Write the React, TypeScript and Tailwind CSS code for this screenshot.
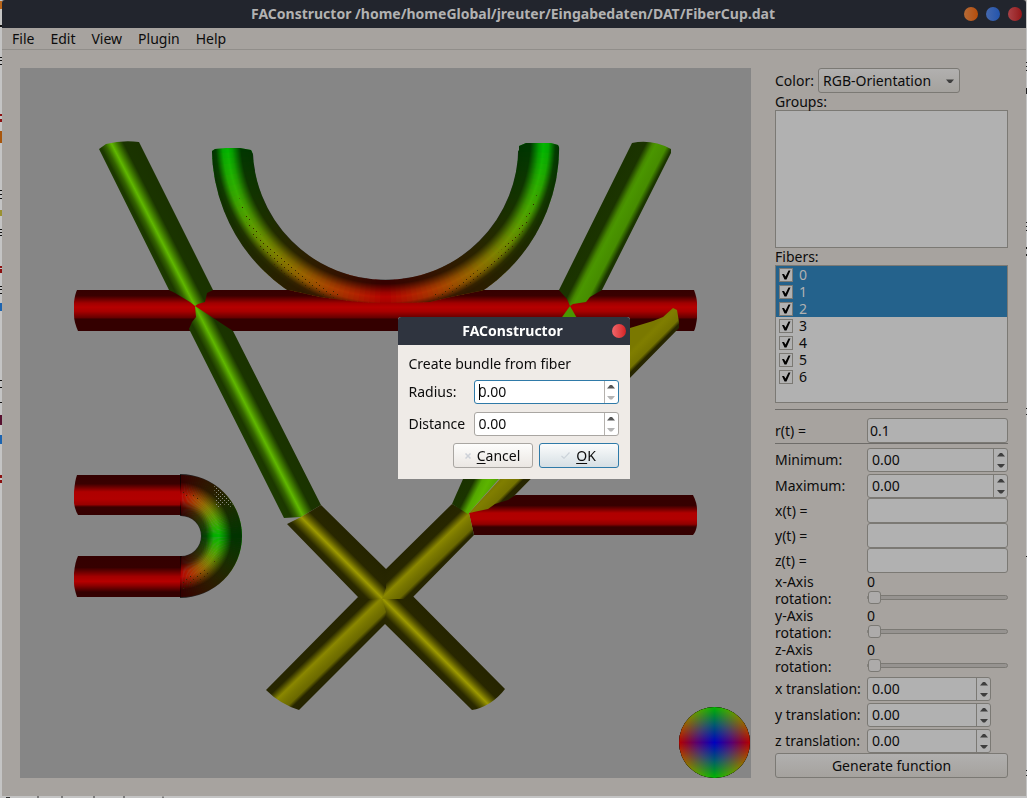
import React, { useState } from 'react';

const menus = ['File', 'Edit', 'View', 'Plugin', 'Help'];
const fibers = ['0', '1', '2', '3', '4', '5', '6'];
const selectedFibers = ['0', '1', '2'];

type Stop = [number, string];

// Shading across a tube, from one edge to the other
const shades: Record<string, { line: [number, number, number, number]; stops: Stop[] }> = {
  redTop: {
    line: [0, 290, 0, 331],
    stops: [[0, '#340000'], [0.14, '#3a0000'], [0.32, '#a00000'], [0.42, '#b60000'], [0.52, '#a80000'], [0.69, '#5e0000'], [0.7, '#340000'], [1, '#340000']],
  },
  redRight: {
    line: [0, 495, 0, 535],
    stops: [[0, '#340000'], [0.26, '#360000'], [0.45, '#b00000'], [0.6, '#b20000'], [0.73, '#900000'], [0.8, '#360000'], [1, '#340000']],
  },
  redUpper: {
    line: [0, 475, 0, 515],
    stops: [[0, '#340000'], [0.22, '#3a0000'], [0.42, '#ae0000'], [0.6, '#b20000'], [0.74, '#980000'], [0.8, '#380000'], [1, '#340000']],
  },
  redLower: {
    line: [0, 556, 0, 597],
    stops: [[0, '#340000'], [0.28, '#360000'], [0.5, '#a20000'], [0.62, '#b60000'], [0.72, '#8c0000'], [0.88, '#340000'], [1, '#340000']],
  },
  greenLeft: {
    line: [169, 290, 204, 272],
    stops: [[0, '#1c3a00'], [0.12, '#1c3800'], [0.25, '#346400'], [0.4, '#60b800'], [0.5, '#468600'], [0.62, '#284e00'], [0.68, '#1a3400'], [1, '#1a3200']],
  },
  greenRight: {
    line: [559, 290, 594, 308],
    stops: [[0, '#1a3200'], [0.26, '#1b3400'], [0.42, '#458600'], [0.5, '#4a9600'], [0.76, '#468c00'], [0.9, '#1b3600'], [1, '#1a3200']],
  },
  greenLower: {
    line: [463, 479, 498, 497],
    stops: [[0, '#1a3200'], [0.26, '#1b3400'], [0.45, '#54a800'], [0.6, '#5cb400'], [1, '#489000']],
  },
  oliveFall: {
    line: [358, 597, 386, 569],
    stops: [[0, '#262500'], [0.14, '#2a2900'], [0.3, '#666400'], [0.41, '#9c9900'], [0.54, '#5c5a00'], [0.66, '#282700'], [1, '#252400']],
  },
  oliveRise: {
    line: [386, 569, 413, 597],
    stops: [[0, '#252400'], [0.26, '#282700'], [0.46, '#8a8700'], [0.6, '#7a7800'], [0.78, '#6a6800'], [0.88, '#272600'], [1, '#252400']],
  },
  oliveFar: {
    line: [642, 337, 670, 365],
    stops: [[0, '#7a7800'], [0.1, '#807e00'], [0.34, '#747200'], [0.43, '#272600'], [1, '#252400']],
  },
};

// A bent tube built of wedges, each coloured by the direction of its tangent
function Bend({ cx, cy, inner, outer, from, to }: { cx: number; cy: number; inner: number; outer: number; from: number; to: number }) {
  const wedges: React.ReactNode[] = [];
  const step = 2;
  for (let a = from; a < to; a += step) {
    const a0 = (a * Math.PI) / 180;
    const a1 = ((a + step + 0.4) * Math.PI) / 180;
    const mid = ((a + step / 2) * Math.PI) / 180;
    const red = Math.round(182 * Math.abs(Math.sin(mid)));
    const green = Math.round(182 * Math.abs(Math.cos(mid)));
    const points = [
      [cx + inner * Math.cos(a0), cy + inner * Math.sin(a0)],
      [cx + outer * Math.cos(a0), cy + outer * Math.sin(a0)],
      [cx + outer * Math.cos(a1), cy + outer * Math.sin(a1)],
      [cx + inner * Math.cos(a1), cy + inner * Math.sin(a1)],
    ];
    wedges.push(<polygon key={a} points={points.map((p) => p.join(',')).join(' ')} fill={`rgb(${red},${green},0)`} />);
  }
  return <>{wedges}</>;
}

function FiberView() {
  return (
    <svg viewBox="20 68 731 710" className="block w-full bg-[#868686]" role="img" aria-label="Fiber view">
      <defs>
        {Object.entries(shades).map(([id, shade]) => (
          <linearGradient
            key={id}
            id={id}
            gradientUnits="userSpaceOnUse"
            x1={shade.line[0]}
            y1={shade.line[1]}
            x2={shade.line[2]}
            y2={shade.line[3]}
          >
            {shade.stops.map(([offset, color]) => (
              <stop key={offset} offset={offset} stopColor={color} />
            ))}
          </linearGradient>
        ))}
        <radialGradient id="arcShade" gradientUnits="userSpaceOnUse" cx="385.500" cy="139" r="173.500">
          <stop offset="0.765" stopOpacity="0.72" />
          <stop offset="0.835" stopOpacity="0.7" />
          <stop offset="0.885" stopOpacity="0.15" />
          <stop offset="0.91" stopOpacity="0" />
          <stop offset="0.94" stopOpacity="0.08" />
          <stop offset="0.98" stopOpacity="0.66" />
          <stop offset="1" stopOpacity="0.72" />
        </radialGradient>
        <radialGradient id="bendShade" gradientUnits="userSpaceOnUse" cx="178" cy="536" r="64">
          <stop offset="0.34" stopOpacity="0.72" />
          <stop offset="0.44" stopOpacity="0.6" />
          <stop offset="0.56" stopOpacity="0.05" />
          <stop offset="0.64" stopOpacity="0" />
          <stop offset="0.72" stopOpacity="0.25" />
          <stop offset="0.84" stopOpacity="0.72" />
          <stop offset="1" stopOpacity="0.72" />
        </radialGradient>
        <clipPath id="arcClip">
          <path d="M212 151 L215 149 L226 148 L240 148 L251 150 L254 156 L300 230 H460 L519 150 L519 146 L526 143 L551 143 L558 145 L560 149 L580 290 H485 L470 293 L446 298 L430 302 L405 303 H372 L350 301 L320 297 L289 290 H200 Z" />
        </clipPath>
        <linearGradient id="ballRed">
          <stop offset="0" stopColor="#b40000" />
          <stop offset="0.5" stopColor="#000" />
          <stop offset="1" stopColor="#b40000" />
        </linearGradient>
        <linearGradient id="ballGreen" x2="0" y2="1">
          <stop offset="0" stopColor="#00b400" />
          <stop offset="0.5" stopColor="#000" />
          <stop offset="1" stopColor="#00b400" />
        </linearGradient>
        <radialGradient id="ballBlue">
          <stop offset="0" stopColor="#0000be" />
          <stop offset="0.5" stopColor="#00006e" />
          <stop offset="0.8" stopColor="#000028" />
          <stop offset="1" stopColor="#000" />
        </radialGradient>
        <pattern id="speckle" width="4" height="4" patternUnits="userSpaceOnUse">
          <rect width="1" height="1" fill="#8c8c80" />
          <rect x="2" y="2" width="1" height="1" fill="#8c8c80" />
        </pattern>
        <pattern id="grain" width="7" height="6" patternUnits="userSpaceOnUse">
          <rect x="1" width="1" height="1" fill="#3a2400" />
          <rect x="4" y="3" width="1" height="1" fill="#3a2400" />
        </pattern>
      </defs>

      {/* straight bundles along x */}
      <path d="M77 290 H694 Q697 298 697 303 V318 Q696 327 694 331 H78 Q74 322 74 315 V302 Q75 294 77 290 Z" fill="url(#redTop)" />
      <path d="M469 513 L490 500 L516 495 H693 Q697 503 697 509 V525 Q696 532 693 535 H474 Z" fill="url(#redRight)" />

      {/* large arc */}
      <g clipPath="url(#arcClip)">
        <Bend cx={385.5} cy={147} inner={133} outer={173.5} from={-4} to={184} />
        <circle cx="385.500" cy="147" r="153.250" fill="none" stroke="url(#arcShade)" strokeWidth="41" />
        <path d="M236 190 Q262 262 345 296 L335 298 Q258 280 236 190 Z" fill="url(#grain)" />
        <path d="M538 190 Q514 262 430 296 L440 298 Q520 270 538 190 Z" fill="url(#grain)" />
      </g>

      {/* left descending bundle */}
      <path d="M99 149 L106 144 Q122 140 139 142 L213 290 L207 293 L205 302 L198 304 L195 306 L190 302 L175 293 L169 290 Z" fill="url(#greenLeft)" />
      <path d="M195 306 L233 331 L321 505 L301 517 L284 518 L189 329 L192 322 L196 317 Z" fill="url(#greenLeft)" />

      {/* right descending bundle */}
      <path d="M632 143 Q652 139 671 149 V153 L602 290 L590 297 L586 302 L573 304 L570 306 L567 299 L559 290 Z" fill="url(#greenRight)" />
      <path d="M570 306 L578 320 H560 Z" fill="#4a9600" />

      {/* crossing diagonals */}
      <path d="M287 524 L301 517 L321 505 L386 569 L505 689 Q499 697 490 703 Q480 709 472 710 L385 624 L358 597 Z" fill="url(#oliveFall)" />
      <path d="M452 504 L386 569 V588 L382 599 H404 L413 597 L474 535 L469 513 Z" fill="url(#oliveRise)" />
      <path d="M358 597 L367 599 H382 L386 612 L385 624 L299 710 Q280 704 266 690 Z" fill="url(#oliveRise)" />
      <path d="M463 479 L475 455 H520 L468 514 L452 504 Z" fill="url(#greenLower)" />
      <path d="M673 308 L677 310 L679 322 V328 L514 496 L508 500 L495 504 L488 509 L469 513 L600 370 L630 328 L653 321 L663 317 Z" fill="url(#oliveFar)" />

      {/* U-shaped bundle */}
      <path d="M77 475 H182 V515 H78 Q75 510 74 503 V492 Q75 480 77 475 Z" fill="url(#redUpper)" />
      <path d="M78 556 H182 V597 H77 Q74 588 74 583 V573 Q75 562 78 556 Z" fill="url(#redLower)" />
      <Bend cx={181} cy={536} inner={20.5} outer={61} from={-90} to={90} />
      <path d="M180 474 A62 62 0 0 1 180 598 V556 H181 A20 20 0 0 0 181 516 H180 Z" fill="url(#bendShade)" />
      <path d="M214 486 L224 492 L236 510 L226 504 L216 508 Z" fill="url(#speckle)" />
      <path d="M182 490 Q212 498 222 520 L210 504 L184 496 Z" fill="url(#grain)" />
      <path d="M180 590 Q208 585 222 550 L210 568 L180 580 Z" fill="url(#grain)" />

      {/* orientation ball */}
      <g className="isolate">
        <circle cx="714.500" cy="742.500" r="35.500" fill="url(#ballRed)" />
        <circle cx="714.500" cy="742.500" r="35.500" fill="url(#ballGreen)" className="mix-blend-screen" />
        <circle cx="714.500" cy="742.500" r="35.500" fill="url(#ballBlue)" className="mix-blend-screen" />
      </g>
    </svg>
  );
}

function Triangle({ down }: { down?: boolean }) {
  return (
    <svg width="8" height="5" viewBox="0 0 8 5" fill="currentColor" aria-hidden="true">
      {down ? <path d="M0 1h8L5 4.500H3z" /> : <path d="M0 4.500h8L5 1H3z" />}
    </svg>
  );
}

function SpinBox({ id, className }: { id: string; className: string }) {
  const [value, setValue] = useState('0.00');
  const bump = (by: number) => setValue((parseFloat(value || '0') + by).toFixed(2));

  return (
    <div className={`flex h-6 rounded-[3px] border border-[#7b7974] bg-[#b1b1b1] ${className}`}>
      <input
        id={id}
        value={value}
        onChange={(e) => setValue(e.target.value)}
        className="min-w-0 flex-1 bg-transparent pl-1 outline-none"
      />
      <div className="flex w-3.5 flex-col border-l border-[#7b7974] text-[#3e3e3e]">
        <button type="button" aria-label="Increase" onClick={() => bump(1)} className="flex flex-1 items-center justify-center">
          <Triangle />
        </button>
        <button type="button" aria-label="Decrease" onClick={() => bump(-1)} className="flex flex-1 items-center justify-center">
          <Triangle down />
        </button>
      </div>
    </div>
  );
}

function TextField({ id, label, initial = '' }: { id: string; label: string; initial?: string }) {
  return (
    <div className="flex h-[25px] items-center">
      <label htmlFor={id} className="w-[92px] shrink-0">{label}</label>
      <input
        id={id}
        defaultValue={initial}
        className="h-[25px] min-w-0 flex-1 rounded-[3px] border border-[#7b7974] bg-[#b1b1b1] px-0.5 outline-none"
      />
    </div>
  );
}

function RotationRow({ axis }: { axis: string }) {
  const [value, setValue] = useState(0);

  return (
    <div className="flex h-[34px] leading-[17px]">
      <label htmlFor={`${axis}-rotation`} className="w-[92px] shrink-0">
        {axis}-Axis
        <br />
        rotation:
      </label>
      <div className="min-w-0 flex-1">
        <output className="block">{value}</output>
        <input
          id={`${axis}-rotation`}
          type="range"
          min={0}
          max={360}
          value={value}
          onChange={(e) => setValue(Number(e.target.value))}
          className="block h-[15px] w-full appearance-none bg-transparent outline-none [&::-webkit-slider-runnable-track]:h-[5px] [&::-webkit-slider-runnable-track]:rounded-sm [&::-webkit-slider-runnable-track]:border [&::-webkit-slider-runnable-track]:border-[#7b7974] [&::-webkit-slider-runnable-track]:bg-[#969390] [&::-webkit-slider-thumb]:-mt-[5px] [&::-webkit-slider-thumb]:size-[13px] [&::-webkit-slider-thumb]:appearance-none [&::-webkit-slider-thumb]:rounded-[3px] [&::-webkit-slider-thumb]:border [&::-webkit-slider-thumb]:border-[#7b7974] [&::-webkit-slider-thumb]:bg-[#adabaa]"
        />
      </div>
    </div>
  );
}

function Sidebar() {
  return (
    <aside className="w-[233px] shrink-0">
      <div className="flex h-[25px] items-center">
        <label htmlFor="color" className="w-[43px] shrink-0">Color:</label>
        <div className="relative">
          <select
            id="color"
            className="block h-[25px] w-[142px] appearance-none rounded-[3px] border border-[#7b7974] bg-linear-to-b from-[#b1b0af] to-[#a5a29e] pl-1 outline-none"
          >
            <option>RGB-Orientation</option>
          </select>
          <svg width="8" height="5" viewBox="0 0 8 5" className="pointer-events-none absolute top-[11px] right-1.5" aria-hidden="true">
            <path d="M0 0.500h8L5 4H3z" fill="#3e3e3e" />
          </svg>
        </div>
      </div>

      <h2 className="leading-[17px]">Groups:</h2>
      <div className="h-[138px] border border-[#7b7974] bg-[#b1b1b1]" />

      <h2 className="leading-[17px]">Fibers:</h2>
      <ul className="h-[138px] border border-[#7b7974] bg-[#b1b1b1]">
        {fibers.map((fiber) => (
          <li key={fiber} className={selectedFibers.includes(fiber) ? 'bg-[#24628c] text-[#b1b1b1]' : ''}>
            <label className="flex h-[17px] items-center gap-1.5 pl-[3px]">
              <span className="relative flex">
                <input
                  type="checkbox"
                  defaultChecked
                  className="peer size-3.5 appearance-none border border-[#7b7974] bg-[#b1b1b1]"
                />
                <svg viewBox="0 0 14 14" className="pointer-events-none absolute inset-0 hidden size-3.5 text-black peer-checked:block" aria-hidden="true">
                  <path d="M3 6 L5 6 L6.500 8.500 L9.500 2.500 L11.500 2.500 L7.500 11.500 H5.500 Z" fill="currentColor" />
                </svg>
              </span>
              {fiber}
            </label>
          </li>
        ))}
      </ul>

      <hr className="mt-1.5 mb-2 border-[#6e6c69]" />
      <TextField id="radius-fn" label="r(t) =" initial="0.1" />
      <hr className="mb-1 border-[#6e6c69]" />

      <div className="flex flex-col gap-0.5">
        <div className="flex items-center">
          <label htmlFor="minimum" className="w-[92px] shrink-0">Minimum:</label>
          <SpinBox id="minimum" className="min-w-0 flex-1" />
        </div>
        <div className="flex items-center">
          <label htmlFor="maximum" className="w-[92px] shrink-0">Maximum:</label>
          <SpinBox id="maximum" className="min-w-0 flex-1" />
        </div>
      </div>
      <TextField id="x-fn" label="x(t) =" />
      <TextField id="y-fn" label="y(t) =" />
      <TextField id="z-fn" label="z(t) =" />

      <RotationRow axis="x" />
      <RotationRow axis="y" />
      <RotationRow axis="z" />

      <div className="flex flex-col gap-0.5 pt-0.5">
        {['x', 'y', 'z'].map((axis) => (
          <div key={axis} className="flex items-center">
            <label htmlFor={`${axis}-translation`} className="w-[92px] shrink-0 whitespace-nowrap">{axis} translation:</label>
            <SpinBox id={`${axis}-translation`} className="w-[124px]" />
          </div>
        ))}
      </div>

      <button
        type="button"
        className="block h-[25px] w-full rounded-[3px] border border-[#7b7974] bg-linear-to-b from-[#b1b0af] to-[#a5a29e]"
      >
        Generate function
      </button>
    </aside>
  );
}

function DialogSpin({ id, label, focused }: { id: string; label: string; focused?: boolean }) {
  const [value, setValue] = useState('0.00');
  const edge = focused ? 'border-[#2f7aa8]' : 'border-[#a9a6a2]';

  return (
    <div className="flex items-center">
      <label htmlFor={id} className="w-[65px] shrink-0">{label}</label>
      <div className={`relative flex h-6 min-w-0 flex-1 rounded-[3px] border bg-white ${edge}`}>
        <input
          id={id}
          value={value}
          onChange={(e) => setValue(e.target.value)}
          className="min-w-0 flex-1 bg-transparent pl-1 outline-none"
        />
        {focused && <span className="absolute top-[3px] left-1 h-4 w-px bg-black" />}
        <div className="flex w-3.5 flex-col border-l border-[#b5b2ae]">
          <button type="button" aria-label={`Increase ${label}`} onClick={() => setValue((parseFloat(value) + 1).toFixed(2))} className="flex flex-1 items-center justify-center text-[#555]">
            <Triangle />
          </button>
          <button type="button" aria-label={`Decrease ${label}`} className="flex flex-1 items-center justify-center text-[#b4b4b4]">
            <Triangle down />
          </button>
        </div>
      </div>
    </div>
  );
}

function BundleDialog() {
  return (
    <div className="fixed inset-0 flex items-center justify-center pb-0.5">
      <div role="dialog" aria-labelledby="dialog-title" className="w-[232px] overflow-hidden rounded-t-[3px] bg-[#efebe7]">
        <div className="flex h-7 items-center bg-[#2f343f] pr-1">
          <h2 id="dialog-title" className="flex-1 pl-4 text-center font-bold text-white">FAConstructor</h2>
          <button type="button" aria-label="Close" className="size-3.5 rounded-full bg-linear-to-r from-[#f2656b] to-[#d41e22]" />
        </div>
        <form className="px-[11px] pt-2.5 pb-[11px]">
          <div className="flex flex-col gap-2">
            <p className="leading-[17px]">Create bundle from fiber</p>
            <DialogSpin id="radius" label="Radius:" focused />
            <DialogSpin id="distance" label="Distance" />
          </div>
          <div className="mt-[7px] flex justify-end gap-1.5">
            <button
              type="button"
              className="flex h-[25px] w-20 items-center justify-center gap-1.5 rounded-[3px] border border-[#a9a6a2] bg-linear-to-b from-[#fdfdfc] to-[#ebe7e3]"
            >
              <svg width="6" height="6" viewBox="0 0 6 6" stroke="#cdd1d8" strokeWidth="1.500" aria-hidden="true">
                <path d="M0.500 0.500l5 5M5.500 0.500l-5 5" />
              </svg>
              <span><span className="underline underline-offset-2">C</span>ancel</span>
            </button>
            <button
              type="button"
              className="flex h-[25px] w-20 items-center justify-center gap-1.5 rounded-[3px] border border-[#2f7aa8] bg-linear-to-b from-[#fbfcfc] to-[#d6dfe4]"
            >
              <svg width="9" height="7" viewBox="0 0 9 7" fill="none" stroke="#ccd3da" strokeWidth="1.200" aria-hidden="true">
                <path d="M0.500 4l2.500 2.300L8.500 0.500" />
              </svg>
              <span><span className="underline underline-offset-2">O</span>K</span>
            </button>
          </div>
        </form>
      </div>
    </div>
  );
}

type Mark = [number, number, string];

// What still shows of the editor window behind the frame
const leftMarks: Mark[] = [
  [1, 8, '#b8651a'], [25, 2, '#111'], [57, 1, '#111'], [60, 1, '#111'], [64, 1, '#111'], [114, 2, '#8c1010'], [119, 3, '#8c1010'],
  [131, 12, '#a8560c'], [190, 1, '#111'], [194, 1, '#111'], [198, 1, '#111'], [210, 6, '#9a9130'], [229, 1, '#111'], [232, 1, '#111'],
  [235, 1, '#111'], [266, 2, '#8c1010'], [269, 4, '#8c1010'], [286, 1, '#111'], [289, 1, '#111'], [293, 1, '#111'], [303, 8, '#1c64b0'],
  [380, 1, '#111'], [387, 1, '#111'], [402, 1, '#111'], [415, 10, '#571030'], [435, 9, '#1c64b0'], [475, 3, '#8c1010'], [480, 3, '#8c1010'],
];
const rightMarks: Mark[] = [
  [62, 1, '#222'], [66, 1, '#222'], [70, 1, '#222'], [88, 6, '#222'], [222, 1, '#222'], [226, 1, '#222'], [230, 1, '#222'],
  [247, 2, '#222'], [254, 2, '#222'], [408, 1, '#222'], [414, 1, '#222'], [556, 1, '#222'], [770, 1, '#222'], [775, 1, '#222'],
];

function BehindEdge({ marks, width }: { marks: Mark[]; width: number }) {
  return (
    <svg width={width} height="796" className="shrink-0" aria-hidden="true">
      {marks.map(([y, h, color]) => (
        <rect key={y} y={y} width={width} height={h} fill={color} />
      ))}
    </svg>
  );
}

function BehindBottom() {
  return (
    <svg width="180" height="2" viewBox="0 0 180 2" className="block" stroke="#333" aria-hidden="true">
      <path d="M6 1.500h4M38 0v2M62 0v2M94 0v2M124 0v2M163 0.500v1.500" />
    </svg>
  );
}

export default function App() {
  return (
    <div className="min-h-screen bg-[#c4c4c4] font-['Noto_Sans',sans-serif] text-sm text-[#0c0c0c]">
      <div className="flex">
        <BehindEdge marks={leftMarks} width={2} />
        <div className="min-w-0 flex-1 bg-[#a7a39f]">
          <header className="flex h-7 items-center gap-2 rounded-t-[3px] bg-[#22252d] pr-1">
            <h1 className="min-w-0 flex-1 truncate pl-[68px] text-center font-bold text-[#b2b2b2]">
              FAConstructor /home/homeGlobal/jreuter/Eingabedaten/DAT/FiberCup.dat
            </h1>
            <button type="button" aria-label="Minimize" className="size-3.5 shrink-0 rounded-full bg-linear-to-r from-[#b46a35] to-[#b54d05]" />
            <button type="button" aria-label="Maximize" className="size-3.5 shrink-0 rounded-full bg-linear-to-r from-[#4468ae] to-[#2354ac]" />
            <button type="button" aria-label="Close" className="size-3.5 shrink-0 rounded-full bg-linear-to-r from-[#ab4146] to-[#941518]" />
          </header>

          <nav className="flex h-[22px] items-center gap-4 border-b border-[#918e8a] pl-2.5">
            {menus.map((menu) => (
              <button key={menu} type="button">{menu}</button>
            ))}
          </nav>

          <main className="flex gap-6 p-[18px]">
            <div className="min-w-0 flex-1 bg-[#868686]">
              <FiberView />
            </div>
            <Sidebar />
          </main>
        </div>
        <BehindEdge marks={rightMarks} width={1} />
      </div>
      <BehindBottom />

      <BundleDialog />
    </div>
  );
}
